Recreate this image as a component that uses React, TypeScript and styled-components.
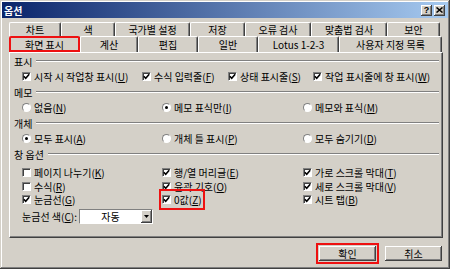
import React from 'react'
import styled, { createGlobalStyle } from 'styled-components'

const Global = createGlobalStyle`
  html, body {
    margin: 0;
    padding: 0;
    background: #d4d0c8;
  }
  body {
    font-family: "Noto Sans CJK KR", "Noto Sans", sans-serif;
    font-size: 10px;
    color: #000;
  }
  u { text-underline-offset: 1px; }
`

const Window = styled.div`
  width: 450px;
  height: 269px;
  box-sizing: border-box;
  padding: 2px;
  background: #d4d0c8;
  box-shadow: inset -1px -1px #404040, inset 1px 1px #d4d0c8, inset -2px -2px #808080, inset 2px 2px #fff;
  display: flex;
  flex-direction: column;
`

const TitleBar = styled.div`
  height: 16px;
  display: flex;
  align-items: center;
  justify-content: space-between;
  padding: 0 3px 0 2px;
  background: linear-gradient(to right, #0a246a, #a6caf0);
`

const Title = styled.span`
  color: #fff;
  font-weight: bold;
  font-size: 10px;
`

const CapButtons = styled.div`
  display: flex;
  gap: 2px;
`

const CapButton = styled.div`
  width: 11px;
  height: 11px;
  box-sizing: border-box;
  background: #d4d0c8;
  box-shadow: inset -1px -1px #404040, inset 1px 1px #fff, inset -2px -2px #808080;
  display: flex;
  align-items: center;
  justify-content: center;
  font-family: "Liberation Sans", sans-serif;
  font-size: 9px;
  font-weight: bold;
  line-height: 1;
`

const Body = styled.div`
  flex: 1;
  display: flex;
  flex-direction: column;
  padding: 4px 5px 0 7px;
`

const TabRow = styled.div<{ $h: number }>`
  display: flex;
  height: ${p => p.$h}px;
`

const Tab = styled.div<{ $w: number; $mark?: boolean }>`
  width: ${p => p.$w}px;
  box-sizing: border-box;
  border-top: 1px solid #fff;
  border-left: 1px solid #fff;
  border-right: 1px solid #404040;
  border-radius: 2px 2px 0 0;
  box-shadow: inset -1px 0 #808080;
  display: flex;
  align-items: center;
  justify-content: center;
  white-space: nowrap;
  ${p => p.$mark && `outline: 2px solid #ee1111; outline-offset: -2px;`}
`

const Panel = styled.div`
  height: 186px;
  box-sizing: border-box;
  border-top: 1px solid #fff;
  border-left: 1px solid #fff;
  border-right: 1px solid #404040;
  border-bottom: 1px solid #404040;
  box-shadow: inset -1px -1px #808080;
  padding: 0 3px 0 4px;
  display: flex;
  flex-direction: column;
`

const GroupLabel = styled.div<{ $top?: number }>`
  height: 14px;
  margin-top: ${p => p.$top ?? 1}px;
  display: flex;
  align-items: center;
  white-space: nowrap;
`

const Rule = styled.div`
  flex: 1;
  height: 0;
  margin-left: 4px;
  border-top: 1px solid #808080;
  border-bottom: 1px solid #fff;
`

const OptionRow = styled.div<{ $cols: string; $h: number; $top?: number }>`
  display: grid;
  grid-template-columns: ${p => p.$cols};
  height: ${p => p.$h}px;
  margin-top: ${p => p.$top ?? 0}px;
  padding-left: 8px;
  align-items: center;
`

const Option = styled.label<{ $mark?: boolean }>`
  display: inline-flex;
  align-items: center;
  gap: 3px;
  justify-self: start;
  white-space: nowrap;
  ${p => p.$mark && `outline: 2px solid #ee1111; outline-offset: 1px;`}
`

const Box = styled.span`
  width: 9px;
  height: 9px;
  box-sizing: border-box;
  background: #fff;
  border-top: 1px solid #808080;
  border-left: 1px solid #808080;
  border-right: 1px solid #fff;
  border-bottom: 1px solid #fff;
  box-shadow: inset 1px 1px #404040;
  display: flex;
  align-items: center;
  justify-content: center;
`

const Radio = styled.span<{ $on?: boolean }>`
  width: 9px;
  height: 9px;
  box-sizing: border-box;
  border-radius: 50%;
  background: #fff;
  border: 1px solid;
  border-color: #808080 #fff #fff #808080;
  display: flex;
  align-items: center;
  justify-content: center;
  &::after {
    content: '';
    width: 3px;
    height: 3px;
    border-radius: 50%;
    background: ${p => (p.$on ? '#000' : 'transparent')};
  }
`

const ColorRow = styled.div`
  display: flex;
  align-items: center;
  gap: 2px;
  padding-left: 8px;
  margin-top: 2px;
  height: 17px;
`

const Combo = styled.div`
  width: 74px;
  height: 15px;
  box-sizing: border-box;
  background: #fff;
  border-top: 1px solid #808080;
  border-left: 1px solid #808080;
  border-right: 1px solid #fff;
  border-bottom: 1px solid #fff;
  display: flex;
`

const ComboText = styled.span`
  flex: 1;
  display: flex;
  align-items: center;
  justify-content: center;
`

const ComboButton = styled.span`
  width: 11px;
  box-sizing: border-box;
  background: #d4d0c8;
  box-shadow: inset -1px -1px #404040, inset 1px 1px #fff, inset -2px -2px #808080;
  display: flex;
  align-items: center;
  justify-content: center;
`

const Footer = styled.div`
  display: flex;
  justify-content: flex-end;
  gap: 9px;
  margin-top: 8px;
  padding-right: 1px;
`

const Button = styled.div<{ $mark?: boolean }>`
  width: 57px;
  height: 15px;
  box-sizing: border-box;
  background: #d4d0c8;
  box-shadow: inset -1px -1px #404040, inset 1px 1px #fff, inset -2px -2px #808080;
  display: flex;
  align-items: center;
  justify-content: center;
  ${p => p.$mark && `outline: 2px solid #ee1111; outline-offset: 1px;`}
`

function Check({ on }: { on?: boolean }) {
  return (
    <Box>
      {on && (
        <svg width="7" height="7" viewBox="0 0 7 7">
          <path d="M0.8 3.2 L2.7 5.2 L6.2 1.2" fill="none" stroke="#000" strokeWidth="1.6" />
        </svg>
      )}
    </Box>
  )
}

type Item = { text: string; key: string; on?: boolean; mark?: boolean }

function Opt({ item, radio }: { item: Item; radio?: boolean }) {
  return (
    <Option $mark={item.mark}>
      {radio ? <Radio $on={item.on} /> : <Check on={item.on} />}
      <span>
        {item.text}(<u>{item.key}</u>)
      </span>
    </Option>
  )
}

const backTabs = [
  ['차트', 52], ['색', 54], ['국가별 설정', 75], ['저장', 55],
  ['오류 검사', 66], ['맞춤법 검사', 76], ['보안', 53],
] as const

const frontTabs = [
  ['화면 표시', 71], ['계산', 58], ['편집', 60], ['일반', 60],
  ['Lotus 1-2-3', 81], ['사용자 지정 목록', 103],
] as const

const showItems: Item[] = [
  { text: '시작 시 작업창 표시', key: 'U', on: true },
  { text: '수식 입력줄', key: 'F', on: true },
  { text: '상태 표시줄', key: 'S', on: true },
  { text: '작업 표시줄에 창 표시', key: 'W', on: true },
]

const memoItems: Item[] = [
  { text: '없음', key: 'N' },
  { text: '메모 표식만', key: 'I', on: true },
  { text: '메모와 표식', key: 'M' },
]

const objectItems: Item[] = [
  { text: '모두 표시', key: 'A', on: true },
  { text: '개체 틀 표시', key: 'P' },
  { text: '모두 숨기기', key: 'D' },
]

const windowRows: Item[][] = [
  [
    { text: '페이지 나누기', key: 'K' },
    { text: '행/열 머리글', key: 'E', on: true },
    { text: '가로 스크롤 막대', key: 'T', on: true },
  ],
  [
    { text: '수식', key: 'R' },
    { text: '윤곽 기호', key: 'O', on: true },
    { text: '세로 스크롤 막대', key: 'V', on: true },
  ],
  [
    { text: '눈금선', key: 'G', on: true },
    { text: '0값', key: 'Z', on: true, mark: true },
    { text: '시트 탭', key: 'B', on: true },
  ],
]

const threeCols = '140px 141px 1fr'

export default function App() {
  return (
    <>
      <Global />
      <Window>
        <TitleBar>
          <Title>옵션</Title>
          <CapButtons>
            <CapButton>?</CapButton>
            <CapButton>
              <svg width="7" height="6" viewBox="0 0 7 6">
                <path d="M0.5 0.5 L6.5 5.5 M6.5 0.5 L0.5 5.5" stroke="#000" strokeWidth="1.5" />
              </svg>
            </CapButton>
          </CapButtons>
        </TitleBar>
        <Body>
          <TabRow $h={14}>
            {backTabs.map(([t, w]) => (
              <Tab key={t} $w={w}>{t}</Tab>
            ))}
          </TabRow>
          <TabRow $h={16}>
            {frontTabs.map(([t, w], i) => (
              <Tab key={t} $w={w} $mark={i === 0}>{t}</Tab>
            ))}
          </TabRow>
          <Panel>
            <GroupLabel>표시<Rule /></GroupLabel>
            <OptionRow $cols="120px 86px 85px 1fr" $h={16}>
              {showItems.map(it => <Opt key={it.key} item={it} />)}
            </OptionRow>
            <GroupLabel>메모<Rule /></GroupLabel>
            <OptionRow $cols={threeCols} $h={16}>
              {memoItems.map(it => <Opt key={it.key} item={it} radio />)}
            </OptionRow>
            <GroupLabel>개체<Rule /></GroupLabel>
            <OptionRow $cols={threeCols} $h={16}>
              {objectItems.map(it => <Opt key={it.key} item={it} radio />)}
            </OptionRow>
            <GroupLabel>창 옵션<Rule /></GroupLabel>
            {windowRows.map((row, i) => (
              <OptionRow key={i} $cols={threeCols} $h={13.5} $top={i === 0 ? 4 : 0}>
                {row.map(it => <Opt key={it.key} item={it} />)}
              </OptionRow>
            ))}
            <ColorRow>
              <span>눈금선 색(<u>C</u>):</span>
              <Combo>
                <ComboText>자동</ComboText>
                <ComboButton>
                  <svg width="5" height="3" viewBox="0 0 5 3">
                    <path d="M0 0 H5 L2.5 3 Z" fill="#000" />
                  </svg>
                </ComboButton>
              </Combo>
            </ColorRow>
          </Panel>
          <Footer>
            <Button $mark>확인</Button>
            <Button>취소</Button>
          </Footer>
        </Body>
      </Window>
    </>
  )
}
